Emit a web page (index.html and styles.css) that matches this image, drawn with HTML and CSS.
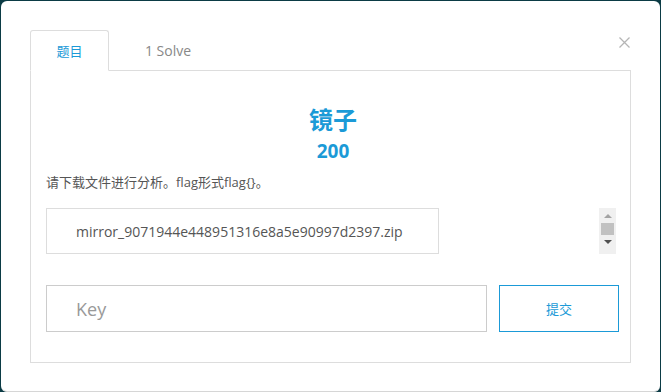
FILE: index.html
```html
<!DOCTYPE html>
<html lang="zh-CN">
  <head>
    <meta charset="UTF-8" />
    <title>镜子</title>
    <link rel="stylesheet" href="styles.css">
  </head>
  <body>
    <div class="modal">
      <button class="close" aria-label="close">
        <svg width="11" height="11" viewBox="0 0 11 11"><path d="M0.5 0.5l10 10M10.5 0.5l-10 10" stroke="#b5b5b5" stroke-width="1.3" fill="none"/></svg>
      </button>
      <nav class="tabs">
        <span class="tab active">题目</span>
        <span class="tab">1 Solve</span>
      </nav>
      <section class="panel">
        <h2 class="title">镜子</h2>
        <div class="score">200</div>
        <p class="desc">请下载文件进行分析。flag形式flag{}。</p>
        <div class="files">
          <a class="file" href="#">mirror_9071944e448951316e8a5e90997d2397.zip</a>
          <div class="scrollbar">
            <span class="arrow up"></span>
            <span class="thumb"></span>
            <span class="arrow down"></span>
          </div>
        </div>
        <form class="submit-row">
          <input type="text" class="key" placeholder="Key" />
          <button type="button" class="btn">提交</button>
        </form>
      </section>
    </div>
  </body>
</html>
```

FILE: styles.css
```css
* { box-sizing: border-box; font-family: "Open Sans", "Noto Sans CJK SC", sans-serif; }
html, body { height: 100%; }
body {
  margin: 0;
  background: #0b3b45;
  padding: 1px 1px 0 1px;
}
.modal {
  position: relative;
  height: 391px;
  background: #fff;
  border-radius: 6px;
  border-bottom: 1px solid #d6d6d6;
  padding: 29px 29px 0 29px;
}
.close {
  position: absolute;
  top: 36px;
  right: 30px;
  border: none;
  background: none;
  padding: 0;
  line-height: 0;
}
.tabs { display: flex; height: 41px; border-bottom: 1px solid #ddd; }
.tab {
  width: 79px;
  display: flex;
  align-items: center;
  justify-content: center;
  font-size: 13px;
  color: #888;
  border: 1px solid transparent;
  margin-bottom: -1px;
}
.tab + .tab { width: 116px; padding-left: 2px; font-size: 14px; }
.tab.active {
  color: #1b9ad7;
  border-color: #ddd;
  border-bottom-color: #fff;
  border-radius: 3px 3px 0 0;
  background: #fff;
}
.panel {
  height: 292px;
  border: 1px solid #ddd;
  border-top: none;
  padding: 34px 10px 0 15px;
}
.title {
  margin: 0;
  text-align: center;
  font-size: 24px;
  line-height: 30px;
  font-weight: 700;
  color: #1b9ad7;
}
.score {
  text-align: center;
  font-size: 19px;
  line-height: 22px;
  font-weight: 700;
  color: #1b9ad7;
  margin-top: 5px;
}
.desc { margin: 10px 0 0; font-size: 13px; line-height: 20px; color: #555; }
.files { display: flex; justify-content: space-between; margin-top: 16px; }
.file {
  width: 393px;
  height: 46px;
  border: 1px solid #ddd;
  display: flex;
  align-items: center;
  padding-left: 29px;
  font-size: 14px;
  color: #555;
  text-decoration: none;
}
.scrollbar {
  width: 17px;
  height: 46px;
  margin-right: 4px;
  background: #f0f0f0;
  display: flex;
  flex-direction: column;
  align-items: center;
  padding-top: 6px;
}
.arrow { width: 0; height: 0; border-left: 4px solid transparent; border-right: 4px solid transparent; }
.arrow.up { border-bottom: 4px solid #a3a3a3; }
.arrow.down { border-top: 4px solid #505050; margin-top: 5px; }
.thumb { width: 13px; height: 12px; background: #c1c1c1; margin-top: 5px; }
.submit-row { display: flex; gap: 12px; margin-top: 31px; }
.key {
  width: 441px;
  height: 47px;
  border: 1px solid #ccc;
  padding-left: 29px;
  font-size: 18px;
  color: #555;
  outline: none;
}
.key::placeholder { color: #999; }
.btn {
  width: 120px;
  height: 47px;
  border: 1.5px solid #1b9ad7;
  background: #fff;
  color: #1b9ad7;
  font-size: 13px;
  cursor: pointer;
}
```
